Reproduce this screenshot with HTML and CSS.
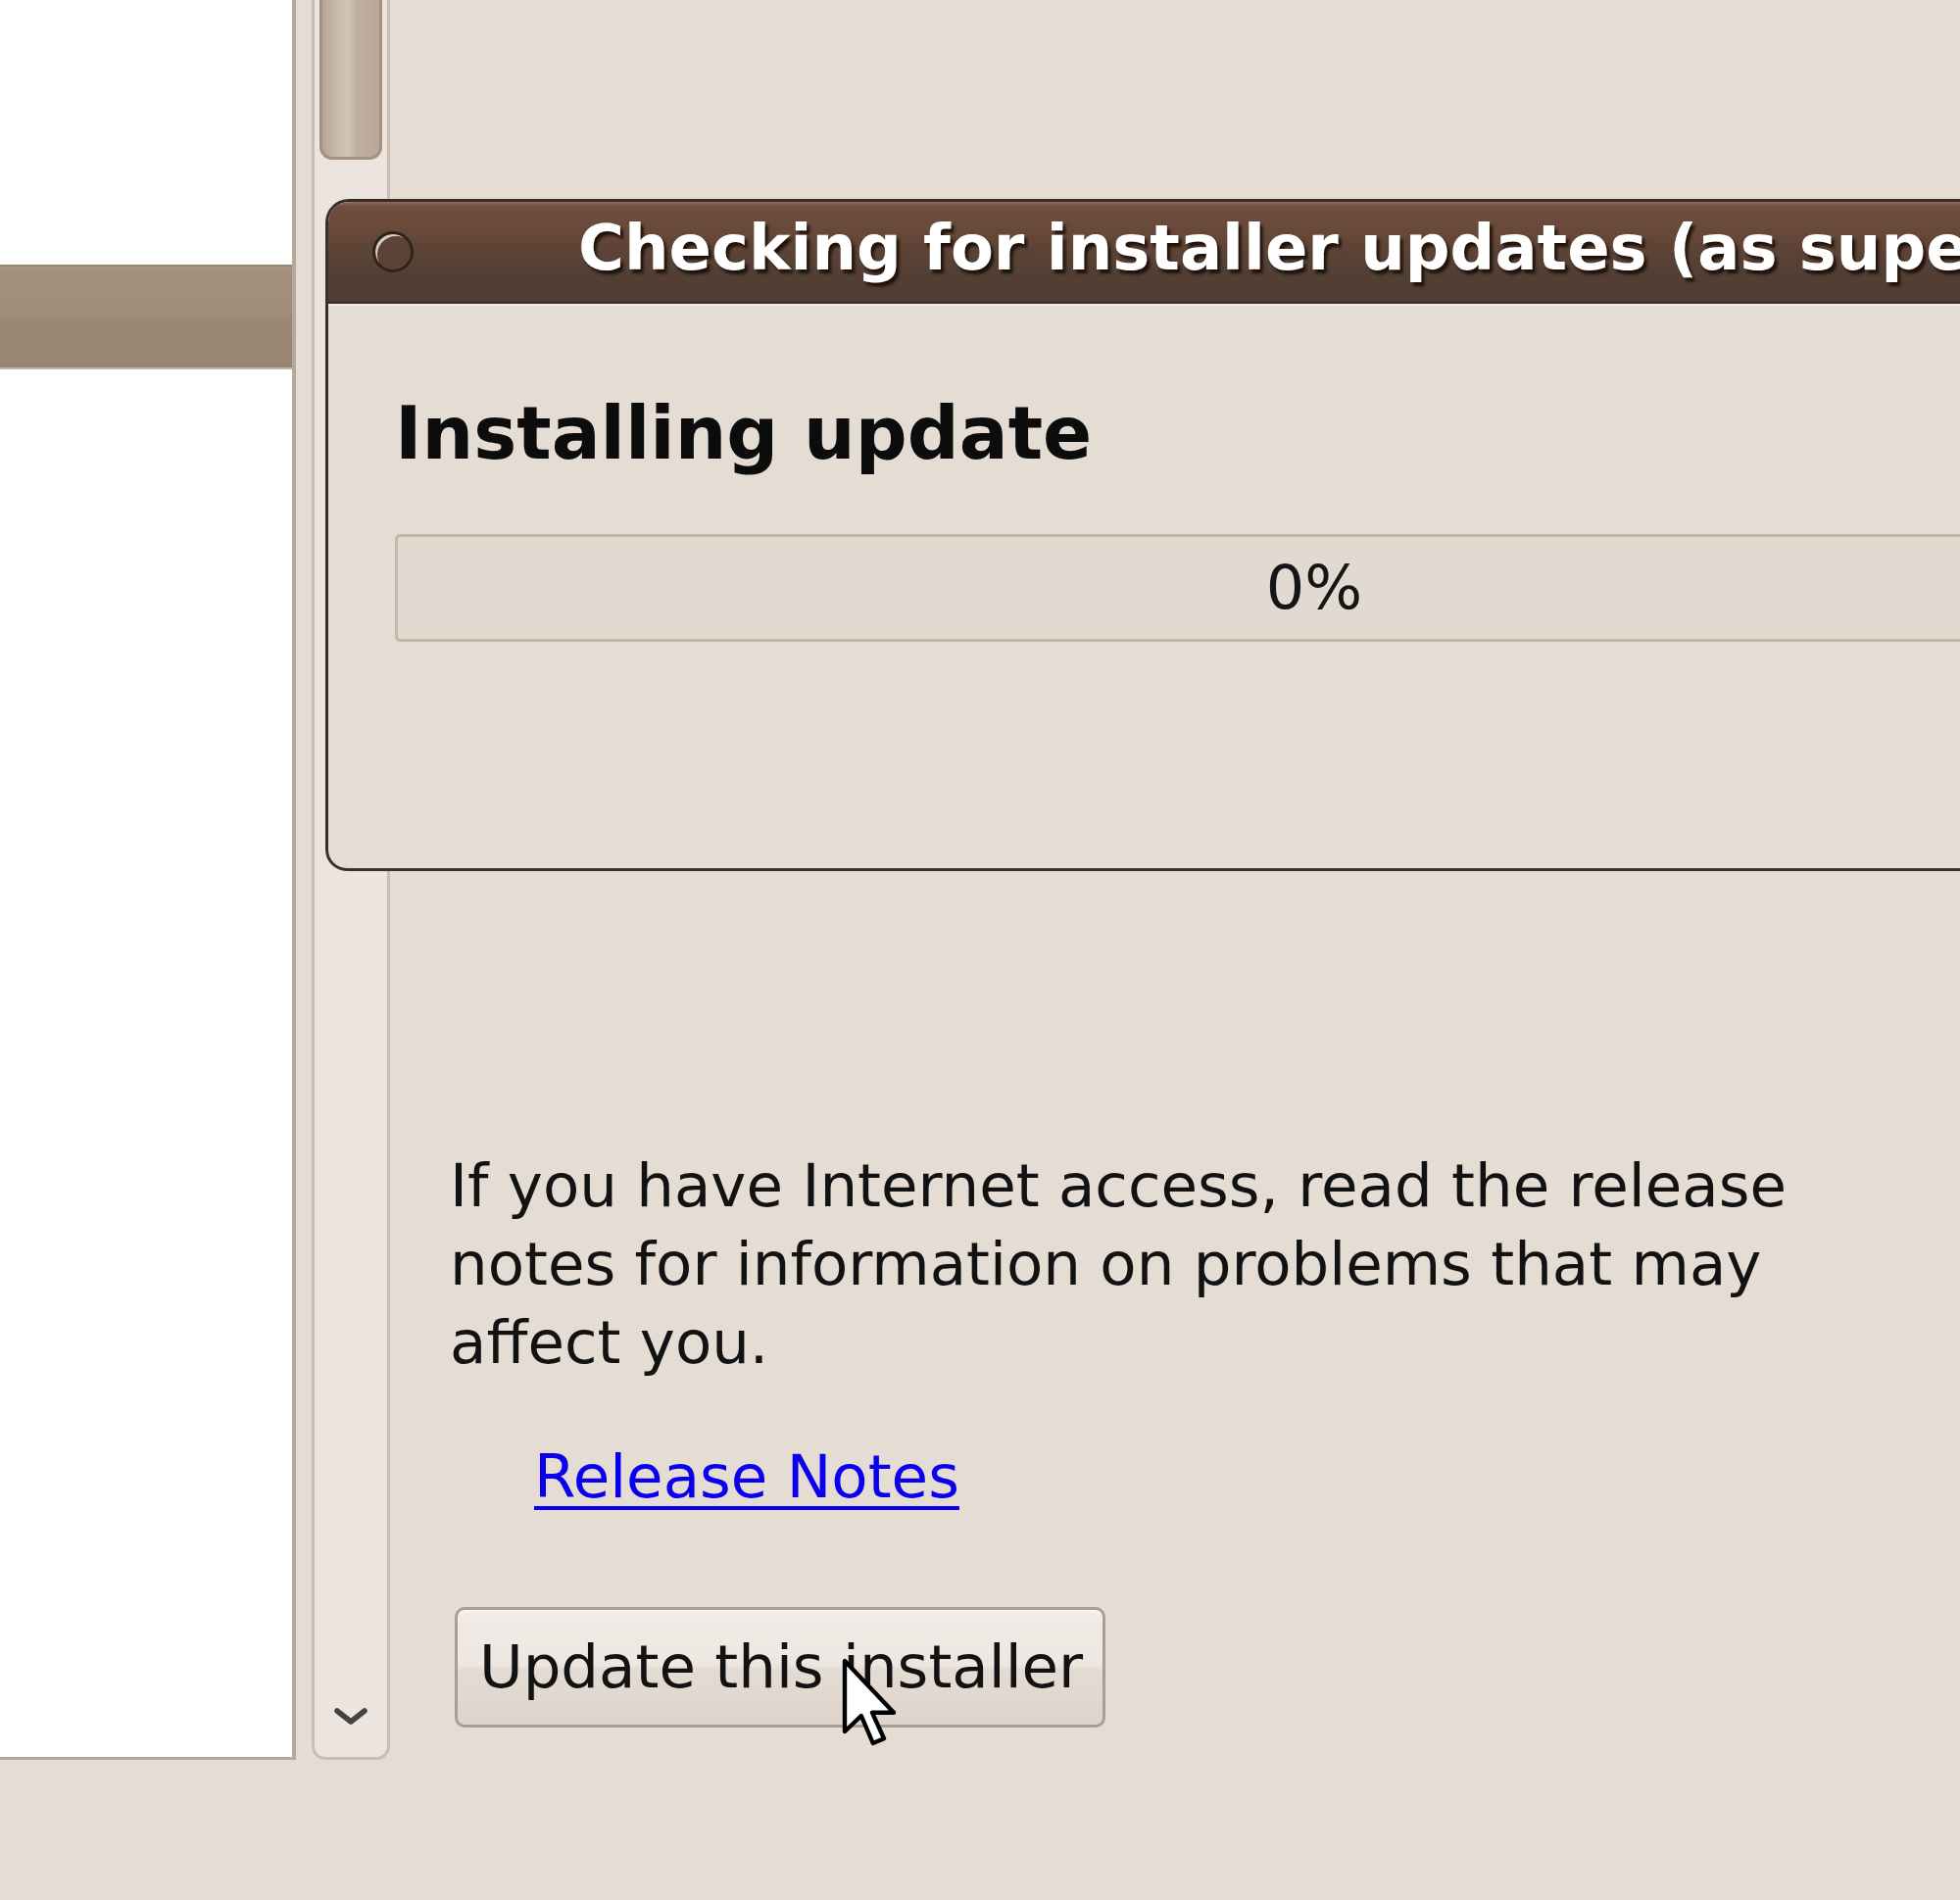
FILE: index.html
```html
<!DOCTYPE html>
<html>
<head>
<meta charset="utf-8">
<title>Installer</title>
<link rel="stylesheet" href="styles.css">
</head>
<body>
<div class="screen">
  <div class="listpane">
    <div class="listrow selected"></div>
  </div>
  <div class="vscroll">
    <div class="thumb"></div>
    <svg class="chev" width="36" height="22" viewBox="0 0 36 22"><path d="M4 5 L18 16 L32 5" fill="none" stroke="#454240" stroke-width="5.5" stroke-linecap="round" stroke-linejoin="round"/></svg>
  </div>
  <main class="page">
    <p class="notes">If you have Internet access, read the release notes for information on problems that may affect you.</p>
    <a class="relnotes" href="#">Release Notes</a>
    <button class="btn" type="button">Update this installer</button>
  </main>
</div>

<div class="dialog">
  <div class="titlebar">
    <span class="winbtn"></span>
    <span class="wintitle">Checking for installer updates (as superuser)</span>
  </div>
  <div class="dlgbody">
    <h1 class="dlghead">Installing update</h1>
    <div class="progress"><span class="pct">0%</span></div>
  </div>
</div>

<svg class="cursor" width="60" height="96" viewBox="0 0 15 24"><polygon points="1,1 1,19 5.2,15 8.2,22 11,20.8 8,14.2 13.5,14.2" fill="#ffffff" stroke="#000000" stroke-width="1.1" stroke-linejoin="round"/></svg>
</body>
</html>
```

FILE: styles.css
```css
* { box-sizing: border-box; }
html, body { margin: 0; padding: 0; }
body {
  width: 2000px;
  height: 1939px;
  overflow: hidden;
  position: relative;
  background: #e5ddd4;
  font-family: "DejaVu Sans", "Liberation Sans", sans-serif;
  color: #121212;
}

.screen {
  display: flex;
  align-items: flex-start;
}

.listpane {
  width: 302px;
  height: 1796px;
  background: #ffffff;
  border-right: 4px solid #b7a999;
  border-bottom: 3px solid #b7a999;
  padding-top: 270px;
  flex: none;
}
.listrow { height: 107px; }
.listrow.selected {
  background: linear-gradient(to bottom, #a8937f 0, #a38f7e 6px, #a18d7b 50%, #9b8775 50%, #988574 100%);
  border-top: 2px solid #9a8877;
  border-bottom: 2px solid #c3b5a8;
}

.vscroll {
  margin-left: 16px;
  width: 80px;
  height: 1796px;
  flex: none;
  background: #ebe4df;
  border: 3px solid #cbbdb0;
  border-top: none;
  border-radius: 0 0 14px 14px;
  display: flex;
  flex-direction: column;
  align-items: center;
  justify-content: space-between;
  padding-bottom: 30px;
}
.thumb {
  width: 64px;
  height: 163px;
  border: 3px solid #a39282;
  border-top: none;
  border-radius: 0 0 13px 13px;
  background: linear-gradient(to right, #b7a595 0, #cbbcaf 30%, #d0c2b6 45%, #c2b1a2 60%, #b8a696 100%);
}
.chev { display: block; }

.page {
  padding: 1170px 0 0 61px;
  flex: none;
}
.notes {
  width: 1420px;
  margin: 0;
  font-size: 61px;
  line-height: 80px;
}
.relnotes {
  display: block;
  width: fit-content;
  margin: 57px 0 0 86px;
  font-size: 61px;
  line-height: 80px;
  color: #0a00ee;
  text-decoration: underline;
  text-decoration-thickness: 4px;
  text-underline-offset: 9px;
}
.btn {
  display: block;
  margin: 93px 0 0 5px;
  padding: 18px 20px 19px 22px;
  font-family: "DejaVu Sans", "Liberation Sans", sans-serif;
  font-size: 61px;
  line-height: 80px;
  color: #121212;
  border: 3px solid #ab9d91;
  border-radius: 10px;
  background: linear-gradient(to bottom, #f1ece7 0, #ede7e1 48%, #e4dbd3 52%, #ded4cb 100%);
  box-shadow: inset 0 2px 0 #f8f5f2;
}

/* dialog window on top */
.dialog {
  position: absolute;
  left: 332px;
  top: 203px;
  width: 2030px;
  height: 686px;
  background: #e5ddd4;
  border: 3px solid #37322e;
  border-top-color: #3a2a22;
  border-radius: 24px 0 0 22px;
  overflow: hidden;
}
.titlebar {
  height: 104px;
  display: flex;
  align-items: center;
  background: linear-gradient(to bottom, #8b6c5e 0, #6f4e40 5px, #684838 30%, #5c4336 50%, #533f34 70%, #4f3d33 100%);
  border-bottom: 2px solid #3a2d26;
  padding-left: 45px;
  overflow: hidden;
}
.winbtn {
  width: 42px;
  height: 42px;
  border-radius: 50%;
  border: 3px solid #2f231d;
  background: #5d4337;
  box-shadow: inset 3px 3px 0 -1px #d8cdc5;
  flex: none;
}
.wintitle {
  margin-left: 168px;
  margin-bottom: 8px;
  font-size: 64px;
  line-height: 70px;
  font-weight: bold;
  color: #ffffff;
  white-space: nowrap;
  text-shadow: 3px 4px 3px rgba(20, 10, 5, 0.85);
}
.dlgbody {
  border-top: 2px solid #f3eee9;
  padding: 85px 68px 0;
}
.dlghead {
  margin: 0;
  font-size: 74px;
  line-height: 90px;
  font-weight: bold;
  color: #0c0c0c;
}
.progress {
  margin-top: 58px;
  height: 110px;
  border: 3px solid #c8b8ab;
  border-radius: 5px;
  background: #e2d9d0;
  display: flex;
  align-items: center;
  justify-content: center;
  padding-right: 12px;
}
.pct {
  font-size: 62px;
  line-height: 80px;
  color: #151515;
}

.cursor {
  position: absolute;
  left: 858px;
  top: 1691px;
}
```
